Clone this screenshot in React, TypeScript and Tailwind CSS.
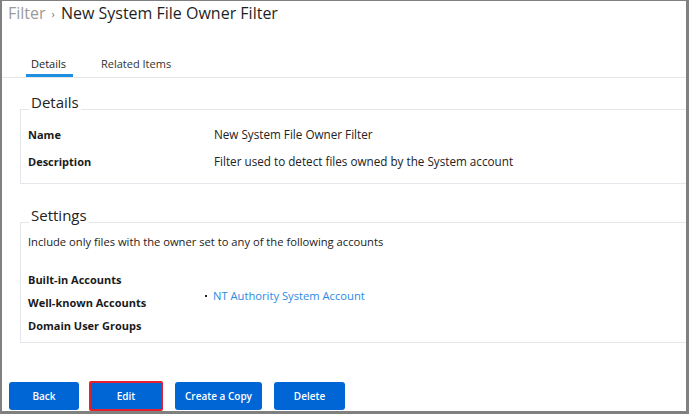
import React from 'react'

const labelCls = "w-[186px] shrink-0 text-[11px] font-bold text-[#1a1a1a]"

function Legend({ children }: { children: React.ReactNode }) {
  return (
    <div className="-mt-[18px] ml-[8px] w-fit bg-white px-[2px] text-[15px] leading-[20px] text-[#222]">
      {children}
    </div>
  )
}

export default function App() {
  return (
    <div className="flex h-[414px] w-[689px] flex-col overflow-hidden border-t border-r-[3px] border-b-[3px] border-l-2 border-[#808080] bg-white font-['Open_Sans',sans-serif] text-[#222]">
      {/* Breadcrumb title */}
      <div className="h-[24px] whitespace-nowrap pl-[6px] text-[16px] leading-[24px]">
        <span className="text-[#9a9a9a]">Filter</span>
        <span className="mx-[6px] align-[1px] text-[11px] leading-none text-[#777]">›</span>
        <span className="text-[#1f1f1f]">New System File Owner Filter</span>
      </div>

      {/* Tabs */}
      <div className="mt-[31px] flex border-b border-[#e6e6e6] pl-[24px] text-[11px] leading-[16px]">
        <div className="border-b-[3px] border-[#1e8fe3] pb-[2px] pl-[5px] pr-[7px] text-[#222]">Details</div>
        <div className="ml-[22px] px-[6px] pb-[5px] text-[#333]">Related Items</div>
      </div>

      {/* Details */}
      <div className="mt-[31px] -mr-[2px] ml-[18px] border border-[#e3e7ec]">
        <Legend>Details</Legend>
        <div className="mt-[9px] pb-[8px] pl-[7px]">
          <div className="flex items-baseline leading-[27px]">
            <div className={labelCls}>Name</div>
            <div className="text-[11.7px] text-[#222]">New System File Owner Filter</div>
          </div>
          <div className="flex items-baseline leading-[27px]">
            <div className={labelCls}>Description</div>
            <div className="text-[11.7px] text-[#222]">Filter used to detect files owned by the System account</div>
          </div>
        </div>
      </div>

      {/* Settings */}
      <div className="mt-[38px] -mr-[2px] ml-[18px] border border-[#e3e7ec]">
        <Legend>Settings</Legend>
        <div className="mt-[9px] pb-[5px] pl-[7px]">
          <div className="text-[11.2px] leading-[16px] text-[#222]">
            Include only files with the owner set to any of the following accounts
          </div>
          <div className="mt-[18px] flex">
            <div className="w-[174px] shrink-0 text-[11px] font-bold leading-[23px] text-[#1a1a1a]">
              <div>Built-in Accounts</div>
              <div>Well-known Accounts</div>
              <div>Domain User Groups</div>
            </div>
            <div className="flex items-center self-start pt-[20px]">
              <span className="ml-[3px] mr-[6px] inline-block h-[2px] w-[2px] bg-[#222]" />
              <span className="text-[11.2px] leading-[16px] text-[#2d8ae3]">NT Authority System Account</span>
            </div>
          </div>
        </div>
      </div>

      {/* Actions */}
      <div className="mt-auto flex items-center pl-[7px] text-[10px] font-semibold text-white">
        <button className="h-[28px] w-[70px] rounded-[3px] bg-[#0066d6]">Back</button>
        <button className="ml-[10px] h-[30px] w-[74px] rounded-[2px] border-2 border-[#e3202e] bg-[#0066d6]">Edit</button>
        <button className="ml-[12px] h-[28px] w-[87px] rounded-[3px] bg-[#0066d6]">Create a Copy</button>
        <button className="ml-[12px] h-[28px] w-[71px] rounded-[3px] bg-[#0066d6]">Delete</button>
      </div>
    </div>
  )
}
